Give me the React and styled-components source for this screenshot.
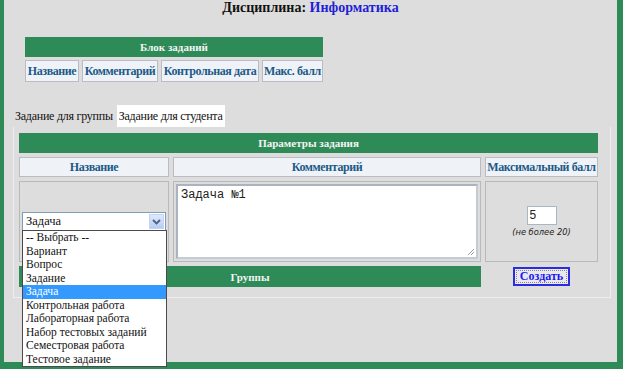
import React from 'react';
import styled, { createGlobalStyle } from 'styled-components';

const GREEN = '#2e8b57';
const SERIF = '"Liberation Serif", "Times New Roman", serif';

const GlobalStyle = createGlobalStyle`
  html, body {
    margin: 0;
    padding: 0;
    background: #dcdcdc;
    font-family: ${SERIF};
  }
`;

const Page = styled.div`
  box-sizing: border-box;
  width: 623px;
  height: 369px;
  background: #dddddd;
  border-left: 4px solid ${GREEN};
  border-right: 6px solid ${GREEN};
  border-bottom: 7px solid ${GREEN};
  display: flex;
  flex-direction: column;
  font-family: ${SERIF};
`;

const Title = styled.h1`
  margin: 0;
  text-align: center;
  font-family: ${SERIF};
  font-size: 14px;
  line-height: 16px;
  font-weight: bold;
  color: #111;
`;

const Subject = styled.span`
  color: #1f1fd6;
`;

const BlockTable = styled.div`
  margin: 21px 0 0 21px;
  width: 298px;
  display: grid;
  grid-template-columns: 54px 76px 98px 61px;
  grid-template-rows: 20px 22px;
  column-gap: 3px;
  row-gap: 3px;
`;

const GreenHead = styled.div`
  grid-column: ${p => p.$span || '1 / -1'};
  height: ${p => p.$h || 20}px;
  background: ${GREEN};
  color: #f4f4f4;
  font-family: ${SERIF};
  font-weight: bold;
  font-size: 11px;
  display: flex;
  align-items: center;
  justify-content: center;
  box-sizing: border-box;
`;

const HeadCell = styled.div`
  box-sizing: border-box;
  background: #eff3f8;
  border: 1px solid #b9bcc2;
  color: #1c5a88;
  font-family: ${SERIF};
  font-weight: bold;
  font-size: 12px;
  display: flex;
  align-items: center;
  justify-content: center;
  white-space: nowrap;
  letter-spacing: -0.4px;
`;

const Tabs = styled.div`
  margin: 23px 0 0 11px;
  display: flex;
  align-items: center;
  height: 22px;
`;

const Tab = styled.div`
  font-family: ${SERIF};
  font-size: 12px;
  line-height: 22px;
  padding: 0 ${p => (p.$active ? 2 : 0)}px;
  margin-left: ${p => (p.$active ? 4 : 0)}px;
  background: ${p => (p.$active ? '#ffffff' : 'transparent')};
  color: #111;
  letter-spacing: -0.25px;
`;

const Panel = styled.div`
  position: relative;
  margin-left: 9px;
  width: 598px;
  box-sizing: border-box;
  border-left: 1px solid #eeeeee;
  border-right: 1px solid #eeeeee;
  border-bottom: 1px solid #eeeeee;
  padding: 6px 12px 10px 5px;
`;

const ParamGrid = styled.div`
  display: grid;
  grid-template-columns: 150px 308px 113px;
  grid-template-rows: 20px 20px 81px 21px;
  gap: 4px;
`;

const Cell = styled.div`
  box-sizing: border-box;
  border: 1px solid #b9b9b9;
  display: flex;
  flex-direction: column;
  align-items: center;
  justify-content: center;
  padding: ${p => p.$pad || 0}px;
`;

const FooterCell = styled.div`
  display: flex;
  align-items: center;
  justify-content: center;
`;

const SelectBox = styled.div`
  position: relative;
  box-sizing: border-box;
  width: 144px;
  height: 19px;
  border: 1px solid #7f9db9;
  background: #fff;
  display: flex;
  align-items: center;
  font-family: ${SERIF};
  font-size: 12.5px;
  padding-left: 3px;
  color: #111;
`;

const Arrow = styled.div`
  margin-left: auto;
  width: 15px;
  height: 15px;
  margin-right: 1px;
  background: linear-gradient(#dfe8fb, #b8cbf0);
  border: 1px solid #c3d3fd;
  box-sizing: border-box;
  display: flex;
  align-items: center;
  justify-content: center;
`;

const TextArea = styled.div`
  box-sizing: border-box;
  width: 100%;
  height: 100%;
  background: #fff;
  border: 2px solid #c3ccd6;
  border-top-color: #aab4c0;
  border-left-color: #aab4c0;
  font-family: "Liberation Mono", "Courier New", monospace;
  font-size: 12px;
  padding: 2px 3px;
  align-self: stretch;
  position: relative;
  color: #222;
`;

const Grip = styled.svg`
  position: absolute;
  right: 1px;
  bottom: 1px;
`;

const NumInput = styled.div`
  box-sizing: border-box;
  width: 30px;
  height: 19px;
  background: #fff;
  border: 1px solid #a8b6c6;
  font-family: "Liberation Sans", Arial, sans-serif;
  font-size: 12px;
  padding: 1px 2px;
  color: #222;
`;

const Hint = styled.div`
  margin-top: 2px;
  font-family: "DejaVu Sans", Verdana, sans-serif;
  font-style: italic;
  font-size: 8.3px;
  color: #222;
`;

const CreateButton = styled.button`
  box-sizing: border-box;
  height: 19px;
  padding: 0 5px;
  background: #e8e8ee;
  border: 2px solid #2b2be0;
  color: #1a1aee;
  font-family: ${SERIF};
  font-weight: bold;
  font-size: 12px;
  outline: 1px dotted #888;
  outline-offset: -4px;
`;

const Dropdown = styled.ul`
  position: absolute;
  left: 8px;
  top: 103px;
  width: 145px;
  margin: 0;
  padding: 0;
  list-style: none;
  background: #fff;
  border: 1px solid #4a4a4a;
  box-sizing: border-box;
  z-index: 5;
`;

const Option = styled.li`
  height: 13.5px;
  line-height: 13.5px;
  font-family: ${SERIF};
  font-size: 11.5px;
  padding-left: 3px;
  white-space: nowrap;
  background: ${p => (p.$selected ? '#3399ff' : 'transparent')};
  color: ${p => (p.$selected ? '#fff' : '#111')};
`;

const options = [
  '-- Выбрать --',
  'Вариант',
  'Вопрос',
  'Задание',
  'Задача',
  'Контрольная работа',
  'Лабораторная работа',
  'Набор тестовых заданий',
  'Семестровая работа',
  'Тестовое задание',
];

export default function App() {
  return (
    <>
      <GlobalStyle />
      <Page>
        <Title>
          Дисциплина: <Subject>Информатика</Subject>
        </Title>

        <BlockTable>
          <GreenHead>Блок заданий</GreenHead>
          <HeadCell>Название</HeadCell>
          <HeadCell>Комментарий</HeadCell>
          <HeadCell>Контрольная дата</HeadCell>
          <HeadCell>Макс. балл</HeadCell>
        </BlockTable>

        <Tabs>
          <Tab>Задание для группы</Tab>
          <Tab $active>Задание для студента</Tab>
        </Tabs>

        <Panel>
          <ParamGrid>
            <GreenHead>Параметры задания</GreenHead>
            <HeadCell>Название</HeadCell>
            <HeadCell>Комментарий</HeadCell>
            <HeadCell>Максимальный балл</HeadCell>

            <Cell>
              <SelectBox>
                Задача
                <Arrow>
                  <svg width="9" height="6" viewBox="0 0 9 6">
                    <path d="M1 1 L4.5 4.5 L8 1" fill="none" stroke="#4d6185" strokeWidth="1.8" />
                  </svg>
                </Arrow>
              </SelectBox>
            </Cell>
            <Cell $pad={2}>
              <TextArea>
                Задача №1
                <Grip width="8" height="8" viewBox="0 0 8 8">
                  <path d="M7 1 L1 7 M7 4 L4 7" stroke="#999" strokeWidth="1" />
                </Grip>
              </TextArea>
            </Cell>
            <Cell>
              <NumInput>5</NumInput>
              <Hint>(не более 20)</Hint>
            </Cell>

            <GreenHead $span="1 / 3" $h={21}>Группы</GreenHead>
            <FooterCell>
              <CreateButton>Создать</CreateButton>
            </FooterCell>
          </ParamGrid>

          <Dropdown>
            {options.map(o => (
              <Option key={o} $selected={o === 'Задача'}>{o}</Option>
            ))}
          </Dropdown>
        </Panel>
      </Page>
    </>
  );
}
